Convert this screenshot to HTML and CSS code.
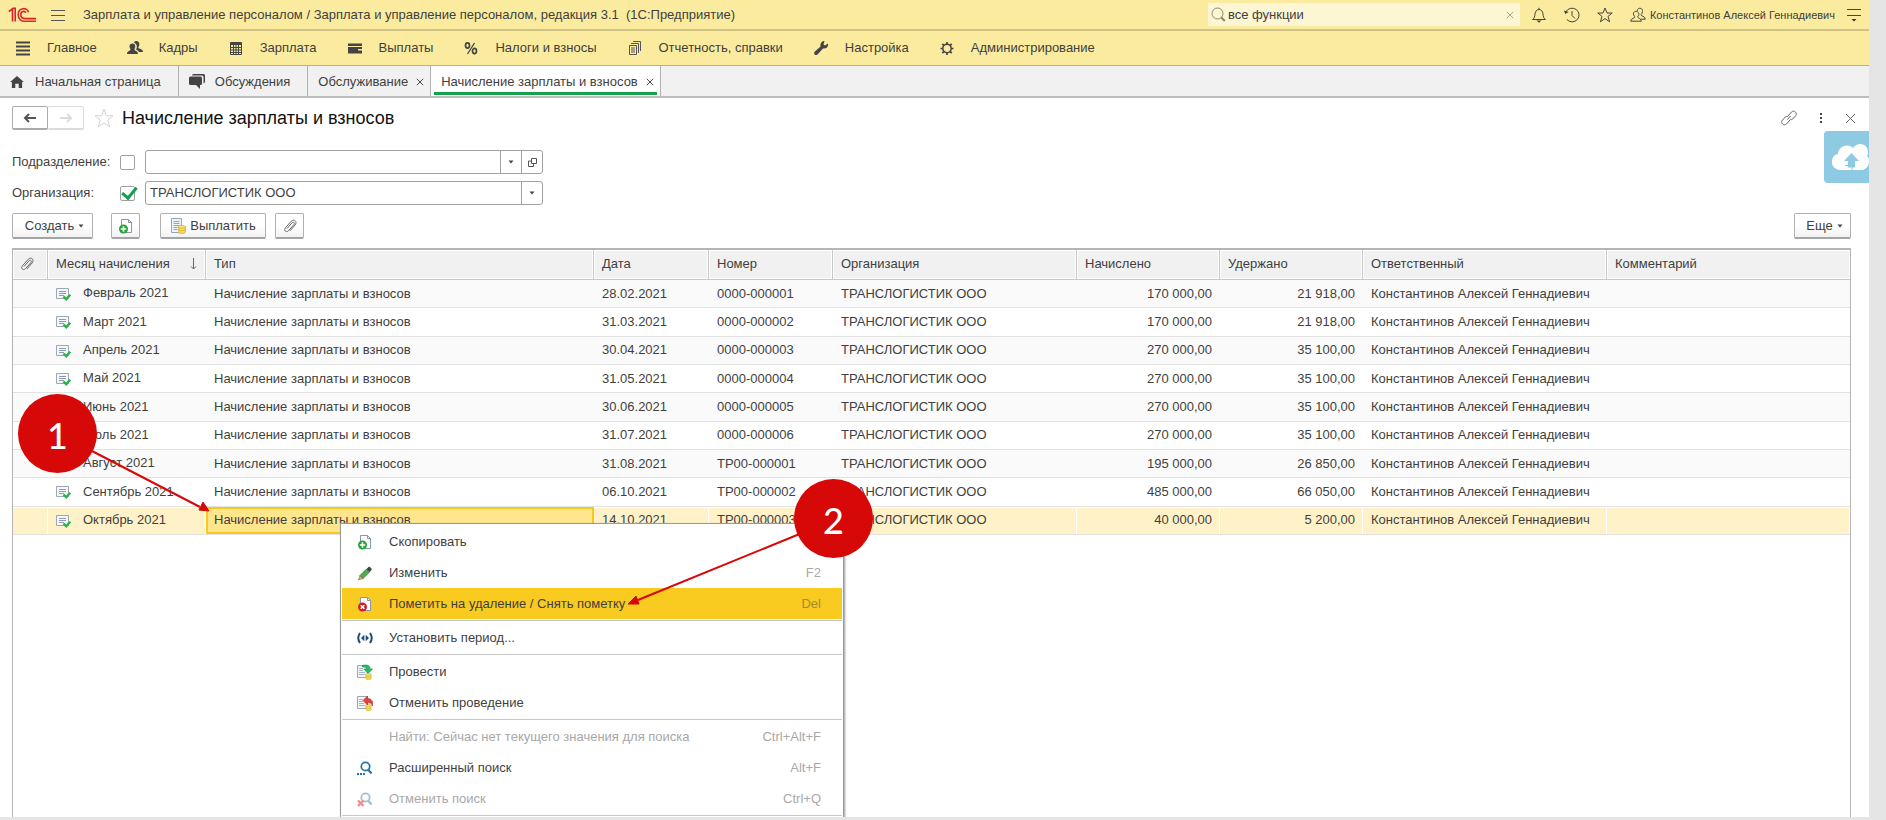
FILE: index.html
```html
<!DOCTYPE html>
<html lang="ru">
<head>
    <meta charset="UTF-8">
    <meta name="viewport" content="width=device-width, initial-scale=1.0">
    <title>Начисление зарплаты и взносов</title>
    <link rel="stylesheet" href="styles.css">
</head>
<body>
    <!-- Общие иконки -->
    <svg class="sprite" aria-hidden="true">
        <symbol id="i-doc" viewBox="0 0 16 16">
            <path d="M.5 2.500h12v10h-12z" fill="#f5f7fa" stroke="#9aa8b8"/>
            <path d="M3 5.500h7M3 7.500h7M3 9.500h5" stroke="#8c9bb0"/>
            <path d="M7.500 10.500l2.700 2.700 4-4.500" fill="none" stroke="#2bb04a" stroke-width="2.400"/>
        </symbol>
        <symbol id="i-clip" viewBox="0 0 16 16">
            <path d="M5 10.500l5-5.700c1.400-1.400 3.200.2 1.900 1.800l-5.500 6.200c-2.300 2.200-5-.6-3-3l5.800-6.500c3-2.900 6.500.4 3.900 3.700l-5 5.800" fill="none" stroke="#666"/>
        </symbol>
        <symbol id="i-copy" viewBox="0 0 16 16">
            <path d="M3.500 1.500h7l3 3v10h-10z" fill="#fff" stroke="#8a98a6"/>
            <path d="M10.500 1.500v3h3" fill="none" stroke="#8a98a6"/>
            <circle cx="5.500" cy="11" r="4.500" fill="#27a338"/>
            <path d="M5.500 8.300v5.400M2.800 11h5.400" stroke="#fff" stroke-width="1.600"/>
        </symbol>
        <symbol id="i-coins" viewBox="0 0 7 8">
            <path d="M.5 1.500v5c0 1.300 6 1.300 6 0v-5z" fill="#f7dc5a" stroke="#d0a428" stroke-width=".6"/>
            <ellipse cx="3.500" cy="1.600" rx="3" ry="1.100" fill="#fcec8a" stroke="#d0a428" stroke-width=".6"/>
            <path d="M.5 4c0 1.300 6 1.300 6 0" fill="none" stroke="#d0a428" stroke-width=".6"/>
        </symbol>
        <symbol id="i-close" viewBox="0 0 10 10">
            <path d="M1 1l8 8M9 1l-8 8" stroke="currentColor" stroke-width="1.200"/>
        </symbol>
        <symbol id="i-down" viewBox="0 0 6 4">
            <path d="M.5.5h5l-2.500 3z" fill="#444"/>
        </symbol>
    </svg>

    <div class="window">
        <!-- Заголовок программы -->
        <header class="titlebar">
            <svg class="logo" viewBox="0 0 29 16" aria-label="1С">
                <g fill="none" stroke="#d8232a" stroke-width="1.600">
                    <path d="M.8 4.500l3.700-2.700v12.700M7.200 14.500v-13.200h-2.700"/>
                    <path d="M20.500 5.200c-1.200-5.200-10.300-5-10.300 2.500 0 4.300 3.200 6.600 6.800 6.600h11"/>
                    <path d="M17.800 5.700c-1.200-2.300-5-1.500-5 1.900 0 2.500 1.800 4 4.200 4h11"/>
                </g>
            </svg>
            <button class="icon-btn" aria-label="Меню">
                <svg width="14" height="12" viewBox="0 0 14 12"><path d="M0 1.500h14M0 6.500h14M0 11.500h14" stroke="#555"/></svg>
            </button>
            <span class="app-title">Зарплата и управление персоналом / Зарплата и управление персоналом, редакция 3.1 &nbsp;(1С:Предприятие)</span>
            <div class="search">
                <svg width="15" height="15" viewBox="0 0 15 15"><circle cx="6.500" cy="6.500" r="5.500" fill="none" stroke="#8b866a"/><path d="M10.300 10.500l3.500 3.500" stroke="#8b866a" stroke-width="2"/></svg>
                <input type="text" value="все функции" aria-label="Поиск">
                <button class="icon-btn search-clear" aria-label="Очистить"><svg width="8" height="8"><use href="#i-close"/></svg></button>
            </div>
            <div class="tools">
                <button class="icon-btn" aria-label="Уведомления">
                    <svg width="16" height="16" viewBox="0 0 16 16"><path d="M1.500 12.500c2-1.500 2.300-3 2.500-5.500.2-2.500 1.700-4.500 4-4.500s3.800 2 4 4.500c.2 2.500.5 4 2.500 5.500zM8 .8v1.700" fill="none" stroke="#444"/><path d="M5.500 13.500h5l-2.500 2.300z" fill="#444"/></svg>
                </button>
                <button class="icon-btn" aria-label="История">
                    <svg width="16" height="16" viewBox="0 0 16 16"><path d="M1.800 5a7 6.800 0 1 1 1 7.500M8 4v4.500l3 3" fill="none" stroke="#444"/><path d="M0 3.500l1.200 3.500 3.500-2z" fill="#444"/></svg>
                </button>
                <button class="icon-btn" aria-label="Избранное">
                    <svg width="16" height="16" viewBox="0 0 16 16"><path d="M8 1l2 5h5.200l-4.200 3.400 1.600 5.400-4.600-3.200-4.600 3.200 1.600-5.400-4.200-3.400h5.200z" fill="none" stroke="#444"/></svg>
                </button>
                <button class="icon-btn" aria-label="Пользователи">
                    <svg width="16" height="16" viewBox="0 0 16 16"><path d="M6.500 4.500c-3.500-.8-4 3.500-1.500 5.200.5 1.500-4.300 1.300-4.300 4.500h10.600c0-3.200-4-2.800-3.600-4.500 2-2 1.500-4.600-1.200-5.200z M7 4c.5-4 6-3.500 5.500.5-.1 1.500-.8 2.400-1.500 3.200-.4 1.500 4.300 1.300 4.300 4.500h-4.500" fill="none" stroke="#444"/></svg>
                </button>
            </div>
            <a class="user" href="#">Константинов Алексей Геннадиевич</a>
            <button class="icon-btn" aria-label="Сервис и настройки">
                <svg width="14" height="14" viewBox="0 0 14 14"><path d="M0 1.500h14M0 7.500h14" stroke="#444"/><path d="M4.500 11h5l-2.500 2.500z" fill="#333"/></svg>
            </button>
        </header>

        <!-- Разделы -->
        <nav class="sections">
            <a href="#"><svg viewBox="0 0 16 16"><path d="M1 2.500h14M1 6.500h14M1 10.500h14M1 14.500h14" stroke="#444" stroke-width="1.800"/></svg>Главное</a>
            <a href="#"><svg viewBox="0 0 16 16"><path d="M5.500 3.500c3.500 0 3.200 4 1.900 5.700 0 1.800 3.600 1.300 3.600 4.800h-11c0-3.500 3.800-3 3.600-4.800-1.500-1.700-1.800-5.700 1.900-5.700z" fill="#444"/><path d="M7 2.800c.7-2.700 5.900-2.300 5.300 2-.1 1.200-.5 2-1.100 2.700.3 1.600 4.800 1.100 4.800 4.500h-4c-.4-1.500-2.200-2-2.900-2.600 1.400-2 1.100-5.500-2.100-6.600z" fill="#444"/></svg>Кадры</a>
            <a href="#"><svg viewBox="0 0 16 16"><path d="M2.500 2.500h11v12h-11z" fill="none" stroke="#444"/><path d="M3 4h10" stroke="#444" stroke-width="2"/><path d="M3 7.500h10M3 10h10M3 12.500h10M5.500 5v9M8 5v9M10.500 5v9" stroke="#444"/></svg>Зарплата</a>
            <a href="#"><svg viewBox="0 0 16 16"><path d="M1 3.500h14v2.500h-14zM1 7h14v2h-4v1.500h4v3h-14z" fill="#444"/></svg>Выплаты</a>
            <a href="#"><svg viewBox="0 0 16 16"><g fill="none" stroke="#444"><ellipse cx="4.500" cy="5.500" rx="2" ry="2.600" stroke-width="1.700"/><ellipse cx="11.500" cy="11" rx="2" ry="2.600" stroke-width="1.700"/><path d="M11.500 3l-7 11" stroke-width="1.300"/></g></svg>Налоги и взносы</a>
            <a href="#"><svg viewBox="0 0 16 16"><g fill="none" stroke="#555"><path d="M2.500 5.500h7v9h-7z"/><path d="M4 3.500h7.500v9.500M6 1.500h7.500v9.500M4 8h4M4 10h4M4 12h4"/></g></svg>Отчетность, справки</a>
            <a href="#"><svg viewBox="0 0 16 16"><path d="M11.500 1l-1 3.500 1.500 1 3-2c.5 3-1.500 5.500-5 5l-5.500 6c-2 1.700-4.500-.5-2.800-2.700l5.800-5.300c-.6-3.400 1.500-5.600 4-5.500z" fill="#444"/></svg>Настройка</a>
            <a href="#"><svg viewBox="0 0 16 16"><circle cx="8" cy="8.500" r="4.200" fill="none" stroke="#444" stroke-width="1.500"/><path d="M8 2v2.500M8 12.500v2.500M1.500 8.500h2.500M12 8.500h2.500M3.300 3.800l2 2M10.700 11.200l2 2M12.700 3.800l-2 2M5.300 11.200l-2 2" stroke="#444" stroke-width="1.700"/></svg>Администрирование</a>
        </nav>

        <!-- Вкладки -->
        <nav class="tabs">
            <a class="tab tab-home" href="#"><svg width="14" height="12" viewBox="0 0 16 14"><path d="M8 0l8 7h-2v7h-4v-5h-4v5h-4v-7h-2z" fill="#444"/></svg>Начальная страница</a>
            <a class="tab tab-talks" href="#"><svg width="16" height="15" viewBox="0 0 16 15"><path d="M4.500 0h10q1.500 0 1.500 1.500v6q0 1.500-1.500 2v-6.500q0-1.500-1.500-1.500h-10q0-1.500 1.500-1.500z" fill="#444"/><path d="M1.500 2.500h10q1.500 0 1.500 1.500v5.500q0 1.500-1.500 1.500h-.500v4l-4-4h-5.500q-1.500 0-1.500-1.500v-5.500q0-1.500 1.500-1.500z" fill="#444"/></svg>Обсуждения</a>
            <div class="tab"><a href="#">Обслуживание</a><button class="icon-btn" aria-label="Закрыть"><svg width="8" height="8"><use href="#i-close"/></svg></button></div>
            <div class="tab active"><a href="#">Начисление зарплаты и взносов</a><button class="icon-btn" aria-label="Закрыть"><svg width="8" height="8"><use href="#i-close"/></svg></button></div>
        </nav>

        <main class="form">
            <div class="form-head">
                <div class="history">
                    <button aria-label="Назад"><svg width="14" height="10" viewBox="0 0 14 10"><path d="M2 5h11M6 1l-4 4 4 4" fill="none" stroke="#555" stroke-width="2"/></svg></button>
                    <button aria-label="Вперед" disabled><svg width="14" height="10" viewBox="0 0 14 10"><path d="M1 5h11M8 1l4 4-4 4" fill="none" stroke="#dcdcdc" stroke-width="2"/></svg></button>
                </div>
                <button class="icon-btn" aria-label="В избранное"><svg width="20" height="20" viewBox="0 0 20 20"><path d="M10 1l2.300 6.800h6.900l-5.500 4.200 2.100 6.800-5.800-4.100-5.800 4.100 2.100-6.800-5.500-4.200h6.900z" fill="none" stroke="#d4d4d4"/></svg></button>
                <h1>Начисление зарплаты и взносов</h1>
                <div class="form-tools">
                    <button class="icon-btn" aria-label="Ссылка"><svg width="16" height="16" viewBox="0 0 16 16"><g fill="none" stroke="#666"><path d="M7 6l3.500-4c2.300-2.300 6.300.7 4.200 3.700l-3 3.300c-.8.800-2 .8-2.700.4"/><path d="M9 10l-3.500 4c-2.300 2.300-6.300-.7-4.200-3.700l3-3.300c.8-.8 2-.8 2.700-.4M6.500 9.500l3-3.500"/></g></svg></button>
                    <button class="icon-btn" aria-label="Действия"><svg width="4" height="12" viewBox="0 0 4 12"><path d="M1 1h2v2h-2zM1 5h2v2h-2zM1 9h2v2h-2z" fill="#444"/></svg></button>
                    <button class="icon-btn" aria-label="Закрыть форму"><svg width="11" height="11" viewBox="0 0 11 11"><path d="M1 1l9 9M10 1l-9 9" stroke="#666"/></svg></button>
                </div>
            </div>

            <!-- Отборы -->
            <div class="filters">
                <label for="use-dep">Подразделение:</label>
                <input type="checkbox" id="use-dep">
                <div class="field">
                    <select aria-label="Подразделение"><option></option></select>
                    <span class="field-btn"><svg width="6" height="4"><use href="#i-down"/></svg></span>
                    <button class="field-btn" aria-label="Открыть"><svg width="9" height="9" viewBox="0 0 9 9"><path d="M3.500.5h5v5h-5zM3 3h-2.500v5.500h5v-2.500" fill="none" stroke="#555"/></svg></button>
                </div>
                <label for="use-org">Организация:</label>
                <input type="checkbox" id="use-org" checked>
                <div class="field">
                    <select aria-label="Организация"><option>ТРАНСЛОГИСТИК ООО</option></select>
                    <span class="field-btn"><svg width="6" height="4"><use href="#i-down"/></svg></span>
                </div>
            </div>

            <!-- Командная панель -->
            <div class="commands">
                <button class="btn btn-create">Создать <svg width="6" height="4"><use href="#i-down"/></svg></button>
                <button class="btn btn-icon" aria-label="Скопировать"><svg width="16" height="16"><use href="#i-copy"/></svg></button>
                <button class="btn btn-pay"><svg width="16" height="16" viewBox="0 0 16 16"><path d="M1.500.5h10v14h-10z" fill="#eef3f8" stroke="#8fa6bd"/><path d="M3.500 3.500h6M3.500 5.500h6M3.500 7.500h6M3.500 9.500h4M3.500 11.500h4" stroke="#8fa6bd"/><use href="#i-coins" x="8" y="7" width="8" height="9"/></svg>Выплатить</button>
                <button class="btn btn-icon" aria-label="Присоединенные файлы"><svg width="16" height="16"><use href="#i-clip"/></svg></button>
                <button class="btn btn-more">Еще <svg width="6" height="4"><use href="#i-down"/></svg></button>
            </div>

            <!-- Список документов -->
            <div class="list">
                <table>
                    <colgroup>
                        <col class="c-clip"><col class="c-month"><col class="c-type"><col class="c-date"><col class="c-num"><col class="c-org"><col class="c-sum"><col class="c-sum"><col class="c-org"><col>
                    </colgroup>
                    <thead>
                        <tr>
                            <th class="clip"><svg width="16" height="16" aria-label="Файлы"><use href="#i-clip"/></svg></th>
                            <th><div class="sorted">Месяц начисления<svg width="7" height="12" viewBox="0 0 7 12"><path d="M3.500 0v11M1 8.500l2.500 2.500 2.500-2.500" fill="none" stroke="#666"/></svg></div></th>
                            <th>Тип</th><th>Дата</th><th>Номер</th><th>Организация</th><th>Начислено</th><th>Удержано</th><th>Ответственный</th><th>Комментарий</th>
                        </tr>
                    </thead>
                    <tbody>
                        <tr><td></td><td class="month"><svg><use href="#i-doc"/></svg>Февраль 2021</td><td>Начисление зарплаты и взносов</td><td>28.02.2021</td><td>0000-000001</td><td>ТРАНСЛОГИСТИК ООО</td><td class="num">170 000,00</td><td class="num">21 918,00</td><td>Константинов Алексей Геннадиевич</td><td></td></tr>
                        <tr><td></td><td class="month"><svg><use href="#i-doc"/></svg>Март 2021</td><td>Начисление зарплаты и взносов</td><td>31.03.2021</td><td>0000-000002</td><td>ТРАНСЛОГИСТИК ООО</td><td class="num">170 000,00</td><td class="num">21 918,00</td><td>Константинов Алексей Геннадиевич</td><td></td></tr>
                        <tr><td></td><td class="month"><svg><use href="#i-doc"/></svg>Апрель 2021</td><td>Начисление зарплаты и взносов</td><td>30.04.2021</td><td>0000-000003</td><td>ТРАНСЛОГИСТИК ООО</td><td class="num">270 000,00</td><td class="num">35 100,00</td><td>Константинов Алексей Геннадиевич</td><td></td></tr>
                        <tr><td></td><td class="month"><svg><use href="#i-doc"/></svg>Май 2021</td><td>Начисление зарплаты и взносов</td><td>31.05.2021</td><td>0000-000004</td><td>ТРАНСЛОГИСТИК ООО</td><td class="num">270 000,00</td><td class="num">35 100,00</td><td>Константинов Алексей Геннадиевич</td><td></td></tr>
                        <tr><td></td><td class="month"><svg><use href="#i-doc"/></svg>Июнь 2021</td><td>Начисление зарплаты и взносов</td><td>30.06.2021</td><td>0000-000005</td><td>ТРАНСЛОГИСТИК ООО</td><td class="num">270 000,00</td><td class="num">35 100,00</td><td>Константинов Алексей Геннадиевич</td><td></td></tr>
                        <tr><td></td><td class="month"><svg><use href="#i-doc"/></svg>Июль 2021</td><td>Начисление зарплаты и взносов</td><td>31.07.2021</td><td>0000-000006</td><td>ТРАНСЛОГИСТИК ООО</td><td class="num">270 000,00</td><td class="num">35 100,00</td><td>Константинов Алексей Геннадиевич</td><td></td></tr>
                        <tr><td></td><td class="month"><svg><use href="#i-doc"/></svg>Август 2021</td><td>Начисление зарплаты и взносов</td><td>31.08.2021</td><td>ТР00-000001</td><td>ТРАНСЛОГИСТИК ООО</td><td class="num">195 000,00</td><td class="num">26 850,00</td><td>Константинов Алексей Геннадиевич</td><td></td></tr>
                        <tr><td></td><td class="month"><svg><use href="#i-doc"/></svg>Сентябрь 2021</td><td>Начисление зарплаты и взносов</td><td>06.10.2021</td><td>ТР00-000002</td><td>ТРАНСЛОГИСТИК ООО</td><td class="num">485 000,00</td><td class="num">66 050,00</td><td>Константинов Алексей Геннадиевич</td><td></td></tr>
                        <tr class="selected"><td></td><td class="month"><svg><use href="#i-doc"/></svg>Октябрь 2021</td><td class="current">Начисление зарплаты и взносов</td><td>14.10.2021</td><td>ТР00-000003</td><td>ТРАНСЛОГИСТИК ООО</td><td class="num">40 000,00</td><td class="num">5 200,00</td><td>Константинов Алексей Геннадиевич</td><td></td></tr>
                    </tbody>
                </table>
            </div>
        </main>

        <!-- Облако -->
        <button class="cloud" aria-label="Загрузить в облако">
            <svg width="37" height="26" viewBox="0 0 37 26"><path d="M8 26c-11-1-10-15-2-16 .5-8 10-11 15-6 5-7 15-4 15 4 0 2-.5 3-1 4 4 4 2 13-5 14z" fill="#fff"/><path d="M19.500 9l7.500 8h-4v6.500h-7v-6.500h-4z" fill="#8ecae1"/><path d="M13 21.500h7v4.500" fill="none" stroke="#8ecae1"/></svg>
        </button>

        <!-- Контекстное меню -->
        <div class="menu">
            <button><svg><use href="#i-copy"/></svg>Скопировать</button>
            <button><svg viewBox="0 0 16 16"><path d="M1.500 15l1.500-4.500 3 3z" fill="#e6b877" stroke="#8c6b3a" stroke-width=".7"/><path d="M3 10.500l6.500-6.500 3 3-6.500 6.500z" fill="#4fae4e" stroke="#3b6e3c" stroke-width=".8"/><path d="M9.500 4l2-2c1-1 4 2 3 3l-2 2z" fill="#444"/></svg>Изменить<kbd>F2</kbd></button>
            <button class="hover"><svg viewBox="0 0 16 16"><path d="M3.500 1.500h7l3 3v10h-10z" fill="#fff" stroke="#8a98a6"/><path d="M10.500 1.500v3h3" fill="none" stroke="#8a98a6"/><circle cx="5.500" cy="11" r="4.500" fill="#d22027"/><path d="M3.700 9.200l3.600 3.600M7.300 9.200l-3.600 3.600" stroke="#fff" stroke-width="1.600"/></svg>Пометить на удаление / Снять пометку<kbd>Del</kbd></button>
            <hr>
            <button><svg viewBox="0 0 16 16"><path d="M3 3q-3.500 5 0 10M13 3q3.500 5 0 10" fill="none" stroke="#1d4a72" stroke-width="2"/><path d="M7.300 4.800v6.400l-3.300-3.200zM8.700 4.800v6.400l3.300-3.200z" fill="#1d4a72"/></svg>Установить период...</button>
            <hr>
            <button><svg viewBox="0 0 16 16"><path d="M.5 1.500h10v12h-10z" fill="#f2f5f8" stroke="#9aa8b8"/><path d="M2 4.500h4M2 6.500h4M2 8.500h6M2 10.500h6" stroke="#a9b5c2"/><path d="M5.500 1.500c5-1.200 7.500 0 7.500 3.500h2.500l-4.500 4.500-4-4.500h2.500c0-1.500-1-2-4-2z" fill="#22c065" stroke="#12813b" stroke-width=".6"/><use href="#i-coins" x="8" y="9" width="7" height="7"/></svg>Провести</button>
            <button><svg viewBox="0 0 16 16"><path d="M.5 1.500h10v12h-10z" fill="#f2f5f8" stroke="#9aa8b8"/><path d="M2 4.500h4M2 6.500h4M2 8.500h5M2 10.500h6" stroke="#a9b5c2"/><use href="#i-coins" x="8" y="9" width="7" height="7"/><path d="M10.500 1v2.500c4 0 6 3 5 7.500-.8-2.700-2.500-3.500-5-3.500v2.500l-4.500-4.500z" fill="#e8413f" stroke="#b82424" stroke-width=".6"/></svg>Отменить проведение</button>
            <hr>
            <button disabled><svg></svg>Найти: Сейчас нет текущего значения для поиска<kbd>Ctrl+Alt+F</kbd></button>
            <button><svg viewBox="0 0 16 16"><circle cx="8.500" cy="6.500" r="4.200" fill="none" stroke="#2a74a8" stroke-width="1.800"/><path d="M11 9.500l3.500 4" stroke="#2a74a8" stroke-width="2.200"/><path d="M0 13h2v2h-2zM3 13h2v2h-2zM6 13h2v2h-2z" fill="#2a74a8"/></svg>Расширенный поиск<kbd>Alt+F</kbd></button>
            <button disabled><svg viewBox="0 0 16 16"><circle cx="8.500" cy="6.500" r="4.200" fill="none" stroke="#9cc0d8" stroke-width="1.800"/><path d="M11 9.500l3.500 4" stroke="#9cc0d8" stroke-width="2.200"/><path d="M1 9.500l5.500 5.500M6.500 9.500l-5.500 5.500" stroke="#ee8d8d" stroke-width="2.400"/></svg>Отменить поиск<kbd>Ctrl+Q</kbd></button>
            <hr>
        </div>

        <!-- Выноски с номерами шагов -->
        <svg class="arrows" width="860" height="620" viewBox="0 0 860 620" aria-hidden="true">
            <g stroke="#d60808" stroke-width="2"><path d="M92 451l108 56M802 533l-164 67"/></g>
            <path d="M209 511l-6-9-4 8zM628 604l8-8 3 8z" fill="#d60808" stroke="#d60808"/>
        </svg>
        <div class="step step-1">1</div>
        <div class="step step-2">2</div>
    </div>
</body>
</html>
```
FILE: styles.css
```css
/* Общие стили */
* {
    box-sizing: border-box;
}

body {
    margin: 0;
    background: #e5e5e5;
    color: #3f3f3f;
    font: 13px/16px "Liberation Sans", Arial, sans-serif;
}

a {
    color: inherit;
    text-decoration: none;
}

button, input, select {
    font: inherit;
    color: inherit;
}

svg {
    display: block;
    flex: none;
}

.sprite {
    position: absolute;
    width: 0;
    height: 0;
}

.icon-btn {
    display: flex;
    align-items: center;
    justify-content: center;
    padding: 0;
    border: 0;
    background: none;
}

.window {
    position: relative;
    display: flex;
    flex-direction: column;
    height: calc(100vh - 3px);
    margin-right: 17px;
    background: #fff;
    overflow: hidden;
}

/* Заголовок программы */
.titlebar {
    display: flex;
    align-items: center;
    height: 31px;
    padding: 0 8px;
    background: #fbeb9e;
    border-bottom: 2px solid #cfc283;
}

.logo {
    width: 29px;
    height: 16px;
    margin-right: 14px;
}

.app-title {
    margin-left: 18px;
}

.search {
    display: flex;
    align-items: center;
    width: 312px;
    height: 23px;
    margin-left: auto;
    padding: 0 6px 0 3px;
    background: #fdf6d3;
}

.search input {
    flex: 1;
    min-width: 0;
    padding: 0 2px;
    border: 0;
    background: none;
    outline: 0;
}

.search-clear {
    color: #a9a48a;
}

.tools {
    display: flex;
    gap: 17px;
    margin: 0 4px 0 11px;
}

.user {
    margin-right: 12px;
    font-size: 11px;
}

/* Разделы */
.sections {
    display: flex;
    gap: 30px;
    align-items: center;
    height: 35px;
    padding: 0 15px;
    background: #fbeb9e;
    border-bottom: 1px solid #bfb277;
}

.sections a {
    display: flex;
    align-items: center;
    gap: 16px;
}

.sections svg {
    width: 16px;
    height: 16px;
}

/* Вкладки */
.tabs {
    display: flex;
    height: 32px;
    background: #f1f1f1;
    border-bottom: 2px solid #bdbdbd;
}

.tab {
    display: flex;
    align-items: center;
    gap: 8px;
    padding: 1px 6px 0 10px;
    border-right: 1px solid #b0b0b0;
}

.tab-home {
    gap: 11px;
    padding-right: 17px;
}

.tab-talks {
    gap: 10px;
    padding-right: 17px;
}

.tab.active {
    background: #fff linear-gradient(#16a04c, #16a04c) no-repeat 3px 26px / calc(100% - 6px) 3px;
}

/* Форма */
.form {
    display: flex;
    flex-direction: column;
    flex: 1;
    min-height: 0;
    padding: 7px 18px 0 12px;
}

.form-head {
    display: flex;
    align-items: center;
    height: 26px;
}

.form-head h1 {
    margin: 0 0 0 8px;
    font-size: 18px;
    font-weight: normal;
    line-height: 24px;
    color: #111;
}

.history {
    display: flex;
    margin-right: 10px;
}

.history button {
    display: flex;
    align-items: center;
    justify-content: center;
    width: 36px;
    height: 24px;
    padding: 0;
    border: 1px solid #ababab;
    border-bottom-width: 2px;
    border-radius: 2px;
    background: #fff;
}

.history button:disabled {
    border-color: #dcdcdc;
    border-left: 0;
}

.form-tools {
    display: flex;
    gap: 22px;
    align-items: center;
    margin-left: auto;
    margin-right: -5px;
}

/* Отборы */
.filters {
    display: grid;
    grid-template-columns: 100px 15px 400px;
    align-items: center;
    gap: 7px 8px;
    margin-top: 19px;
}

.filters .field {
    margin-left: 2px;
}

.filters input {
    appearance: none;
    width: 15px;
    height: 15px;
    margin: 0;
    border: 1px solid #a0a0a0;
    border-radius: 2px;
    background: #fff;
}

.filters input:checked::before {
    content: "";
    display: block;
    width: 6px;
    height: 12px;
    margin: -3px 0 0 4px;
    border: solid #12a04b;
    border-width: 0 3px 3px 0;
    transform: rotate(40deg);
}

.field {
    display: flex;
    height: 24px;
    border: 1px solid #a0a0a0;
    border-radius: 3px;
    background: #fff;
}

.field select {
    appearance: none;
    flex: 1;
    min-width: 0;
    padding: 0 4px;
    border: 0;
    background: none;
}

.field-btn {
    display: flex;
    align-items: center;
    justify-content: center;
    width: 21px;
    padding: 0;
    border: 0;
    border-left: 1px solid #a0a0a0;
    background: none;
    pointer-events: none;
}

/* Командная панель */
.commands {
    display: flex;
    margin: 8px 0 9px;
}

.btn {
    display: flex;
    align-items: center;
    justify-content: center;
    gap: 4px;
    height: 26px;
    padding: 0;
    border: 1px solid #b0b0b0;
    border-bottom: 2px solid #a4a4a4;
    border-radius: 2px;
    background: linear-gradient(#fff 50%, #f2f2f2);
}

.btn-create {
    width: 81px;
    margin-right: 18px;
}

.btn-icon {
    width: 29px;
}

.btn-pay {
    width: 106px;
    margin: 0 9px 0 20px;
}

.btn-more {
    width: 57px;
    margin-left: auto;
}

.btn-create, .btn-more {
    padding-left: 4px;
}

/* Список документов */
.list {
    flex: 1;
    border: solid #b5b5b5;
    border-width: 2px 1px 0;
    min-height: 0;
}

table {
    width: 100%;
    height: 285px;
    table-layout: fixed;
    border-collapse: separate;
    border-spacing: 0;
}

.c-clip { width: 35px; }
.c-month { width: 158px; }
.c-type { width: 388px; }
.c-date { width: 115px; }
.c-num { width: 124px; }
.c-org { width: 244px; }
.c-sum { width: 143px; }

th, td {
    padding: 0 8px;
    text-align: left;
    font-weight: normal;
    white-space: nowrap;
}

th {
    height: 30px;
    padding-bottom: 1px;
    background: #f1f1f1;
    border-right: 1px solid #c8c8c8;
    border-bottom: 1px solid #c8c8c8;
    box-shadow: inset 0 0 0 1px #fff;
}

th:last-child {
    border-right: 0;
}

.clip {
    padding-left: 6px;
}

td {
    border-bottom: 1px solid #e2e2e2;
}

tbody tr:nth-child(odd) {
    background: #fafafa;
}

.sorted {
    display: flex;
    align-items: center;
    justify-content: space-between;
}

.month svg {
    display: inline-block;
    width: 16px;
    height: 16px;
    margin-right: 11px;
    vertical-align: middle;
}

.num {
    text-align: right;
}

.selected td {
    background: #fff2c8;
    box-shadow: inset -1px 1px 0 #fff;
}

.selected .current {
    background: #ffe58c;
    box-shadow: inset 0 0 0 2px #f9c81e;
}

/* Облако */
.cloud {
    position: absolute;
    top: 131px;
    right: 0;
    width: 45px;
    height: 52px;
    padding: 0 0 0 8px;
    border: 0;
    border-radius: 4px 0 0 4px;
    background: #8ecae1;
    overflow: hidden;
}

/* Контекстное меню */
.menu {
    position: absolute;
    top: 523px;
    left: 340px;
    width: 504px;
    padding: 2px 1px 20px;
    border: 1px solid #9a9a9a;
    background: #fff;
    box-shadow: 1px 1px 2px #999;
}

.menu button {
    display: flex;
    align-items: center;
    gap: 16px;
    width: 100%;
    height: 31px;
    padding: 0 21px 0 15px;
    border: 0;
    background: none;
    text-align: left;
}

.menu svg {
    width: 16px;
    height: 16px;
}

.menu kbd {
    margin-left: auto;
    font: inherit;
    color: #a8a8a8;
}

.menu button:disabled {
    color: #a8a8a8;
}

.menu .hover {
    background: #f9cb20;
}

.menu .hover kbd {
    color: #a48a2c;
}

.menu hr {
    height: 1px;
    margin: 1px 0;
    border: 0;
    background: #c8c8c8;
}

/* Выноски */
.arrows {
    position: absolute;
    top: 0;
    left: 0;
    pointer-events: none;
}

.step {
    position: absolute;
    width: 79px;
    height: 79px;
    border-radius: 50%;
    background: #d60808;
    color: #fff;
    font: 500 36px/82px Lato, sans-serif;
    text-align: center;
}

.step-1 {
    top: 394px;
    left: 18px;
}

.step-2 {
    top: 479px;
    left: 794px;
}
```
